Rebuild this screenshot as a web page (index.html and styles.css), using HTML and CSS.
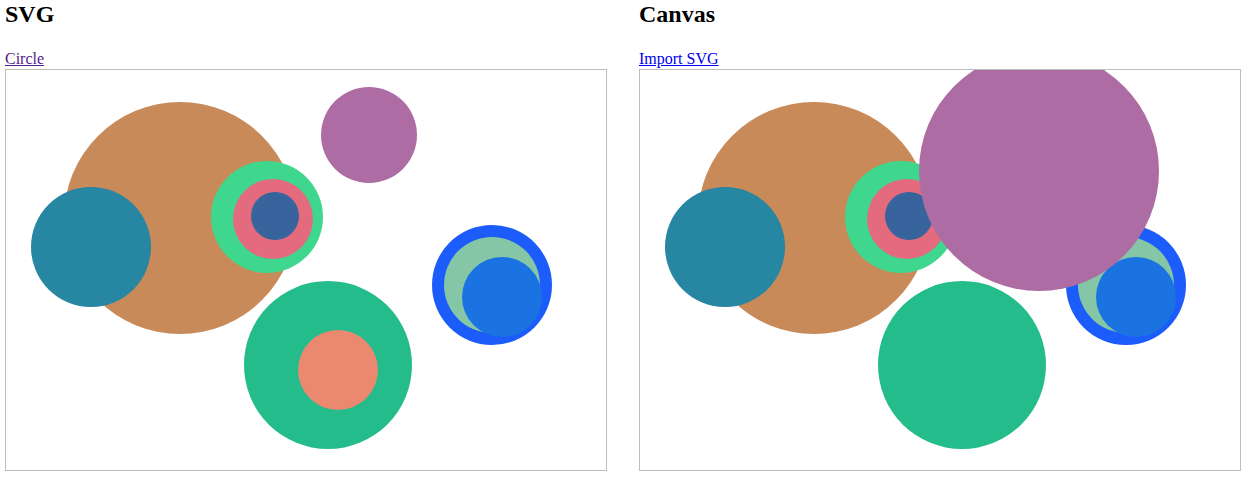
FILE: index.html
```html
<!DOCTYPE html>
<html>
<head>
<meta charset="utf-8">
<title>SVG vs Canvas</title>
<link rel="stylesheet" href="styles.css">
</head>
<body>
<div class="page">
  <section class="col">
    <h2 class="title">SVG</h2>
    <div class="linkrow"><a class="link visited" href="#circle">Circle</a></div>
    <svg class="stage" width="600" height="400" viewBox="0 0 600 400">
      <circle cx="174" cy="148" r="116" fill="#c88a59"/>
      <circle cx="85" cy="177" r="60" fill="#2786a1"/>
      <circle cx="261" cy="147" r="56" fill="#3fd78e"/>
      <circle cx="267" cy="149" r="40" fill="#e46a7e"/>
      <circle cx="269" cy="146" r="24" fill="#37649c"/>
      <circle cx="363" cy="65" r="48" fill="#ad6ca3"/>
      <circle cx="322" cy="295" r="84" fill="#25bc8b"/>
      <circle cx="332" cy="300" r="40" fill="#ea8970"/>
      <circle cx="486" cy="215" r="60" fill="#1c5cfa"/>
      <circle cx="486" cy="215" r="48" fill="#84c6a5"/>
      <circle cx="496" cy="227" r="40" fill="#1b73e1"/>
    </svg>
  </section>
  <section class="col">
    <h2 class="title">Canvas</h2>
    <div class="linkrow"><a class="link" href="#import">Import SVG</a></div>
    <svg class="stage" width="600" height="400" viewBox="0 0 600 400">
      <circle cx="174" cy="148" r="116" fill="#c88a59"/>
      <circle cx="85" cy="177" r="60" fill="#2786a1"/>
      <circle cx="261" cy="147" r="56" fill="#3fd78e"/>
      <circle cx="267" cy="149" r="40" fill="#e46a7e"/>
      <circle cx="269" cy="146" r="24" fill="#37649c"/>
      <circle cx="322" cy="295" r="84" fill="#25bc8b"/>
      <circle cx="486" cy="215" r="60" fill="#1c5cfa"/>
      <circle cx="486" cy="215" r="48" fill="#84c6a5"/>
      <circle cx="496" cy="227" r="40" fill="#1b73e1"/>
      <circle cx="399" cy="101" r="120" fill="#ad6ca3"/>
    </svg>
  </section>
</div>
</body>
</html>
```
FILE: styles.css
```css
html, body {
  margin: 0;
  padding: 0;
  background: #ffffff;
}
body {
  font-family: "Liberation Serif", "Times New Roman", serif;
  color: #000;
}
.page {
  display: flex;
  gap: 32px;
  padding-left: 5px;
  align-items: flex-start;
}
.col {
  display: flex;
  flex-direction: column;
  width: 602px;
}
.title {
  margin: 0 0 22px 0;
  font-size: 24px;
  font-weight: bold;
  line-height: 28px;
}
.linkrow {
  font-size: 16px;
  line-height: 18px;
  margin-bottom: 1px;
}
.link {
  color: #0000ee;
  text-decoration: underline;
}
.link.visited {
  color: #551a8b;
}
.stage {
  display: block;
  border: 1px solid #bdbdbd;
  background: #fff;
  overflow: hidden;
}
```
